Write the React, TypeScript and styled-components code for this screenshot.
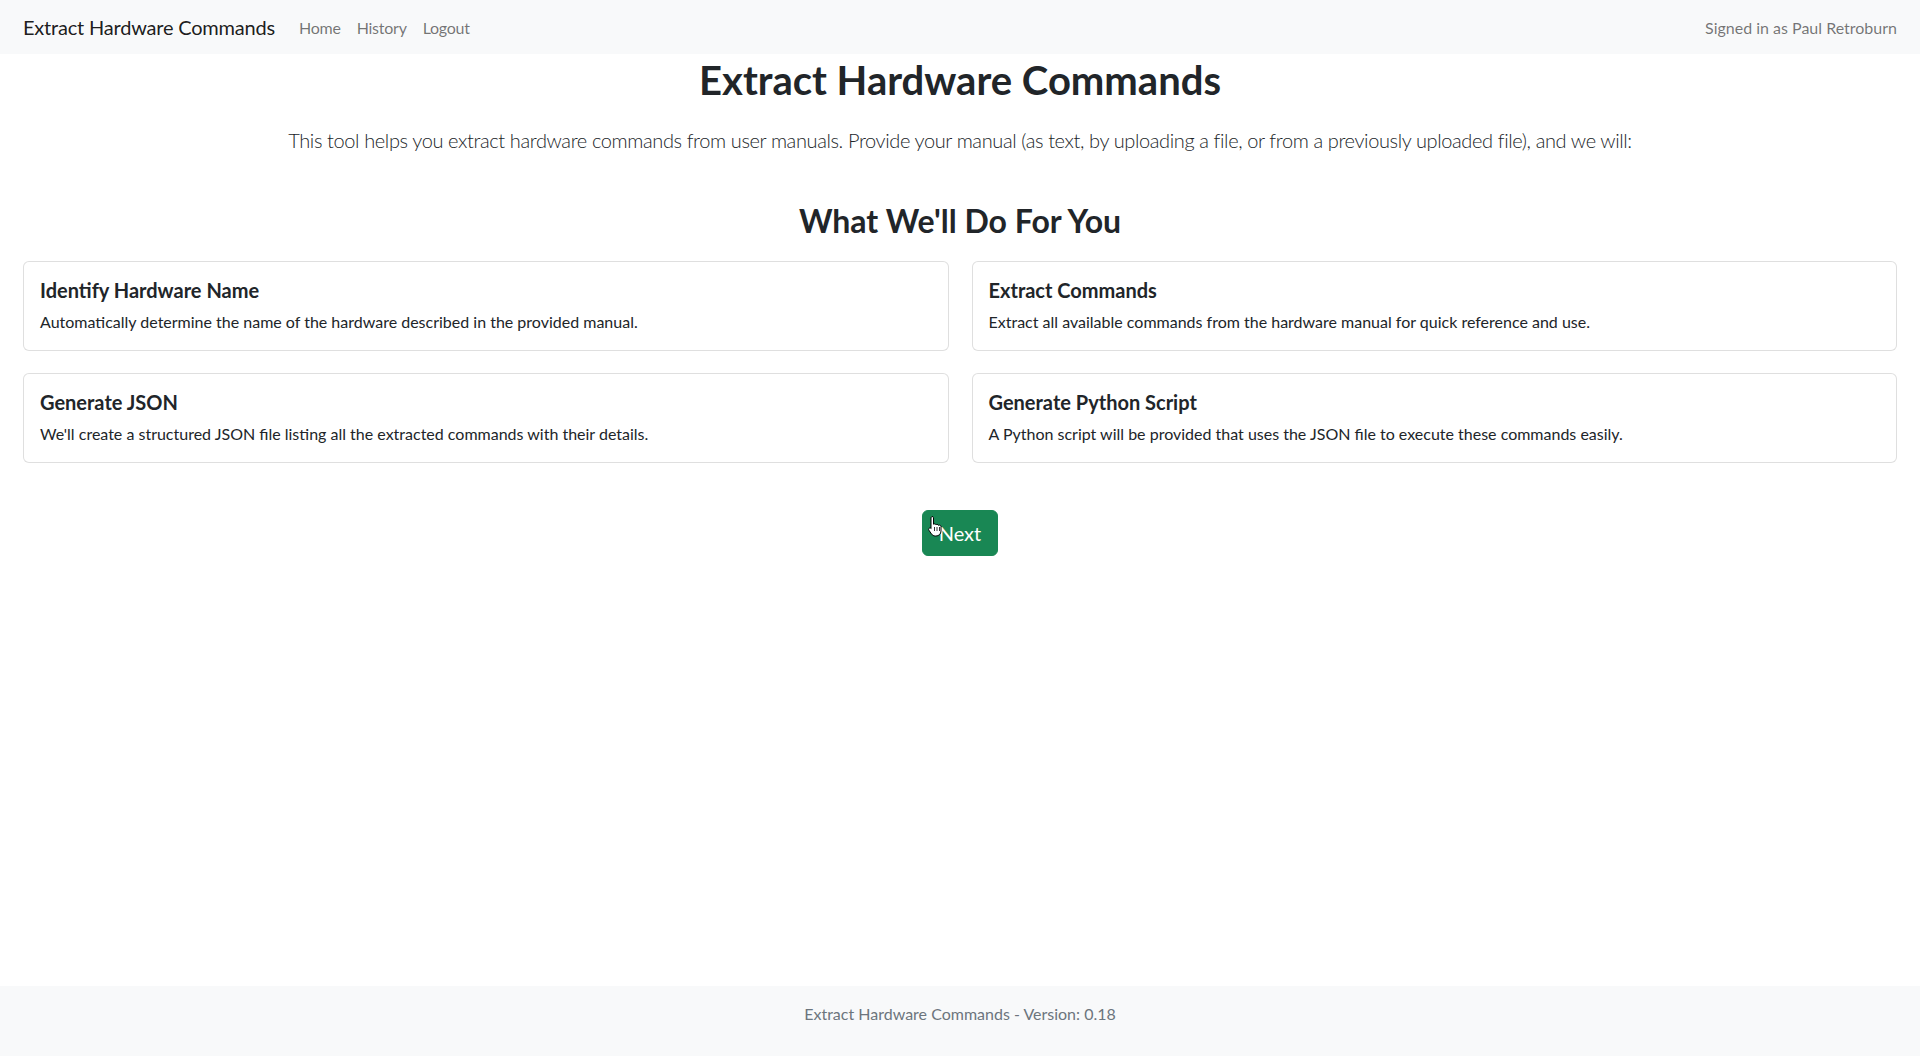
import React from "react";
import styled, { createGlobalStyle } from "styled-components";

const Global = createGlobalStyle`
  html, body { margin: 0; padding: 0; }
  body {
    font-family: Lato, "Noto Sans", "Liberation Sans", sans-serif;
    color: #212529;
    background: #fff;
  }
  * { box-sizing: border-box; }
`;

const Page = styled.div`
  min-height: 100vh;
  display: flex;
  flex-direction: column;
`;

const Navbar = styled.nav`
  height: 54px;
  background: #f8f9fa;
  display: flex;
  align-items: center;
  padding: 0 23px;
`;

const Brand = styled.a`
  font-size: 20px;
  color: rgba(0, 0, 0, 0.9);
  margin-right: 16px;
  letter-spacing: -0.2px;
  text-decoration: none;
`;

const NavLinks = styled.div`
  display: flex;
  flex: 1;
`;

const NavLink = styled.a`
  font-size: 16px;
  color: rgba(0, 0, 0, 0.55);
  padding: 8px 8px;
  letter-spacing: -0.25px;
  text-decoration: none;
`;

const NavText = styled.span`
  font-size: 16px;
  color: rgba(0, 0, 0, 0.55);
`;

const Main = styled.main`
  flex: 1;
  padding: 0 23px;
  display: flex;
  flex-direction: column;
  align-items: center;
`;

const Title = styled.h1`
  font-size: 40px;
  font-weight: 700;
  line-height: 1.2;
  margin: 2px 0 21px;
  text-align: center;
`;

const Lead = styled.p`
  font-size: 20px;
  font-weight: 300;
  line-height: 1.5;
  letter-spacing: -0.38px;
  margin: 0;
  color: #212529;
  text-align: center;
`;

const SectionTitle = styled.h2`
  font-size: 32px;
  font-weight: 700;
  line-height: 1.2;
  margin: 47px 0 21px;
  text-align: center;
`;

const Grid = styled.div`
  width: 100%;
  display: grid;
  grid-template-columns: 1fr 1fr;
  column-gap: 23px;
  row-gap: 22px;
`;

const Card = styled.div`
  border: 1px solid rgba(0, 0, 0, 0.125);
  border-radius: 6px;
  padding: 16px;
  background: #fff;
`;

const CardTitle = styled.h5`
  font-size: 20px;
  font-weight: 700;
  line-height: 1.2;
  margin: 0 0 8px;
`;

const CardText = styled.p`
  font-size: 16px;
  line-height: 1.5;
  margin: 0;
`;

const ButtonWrap = styled.div`
  position: relative;
  margin-top: 47px;
`;

const NextButton = styled.button`
  font-family: inherit;
  font-size: 20px;
  line-height: 1.5;
  padding: 7px 16px;
  border-radius: 6px;
  border: 1px solid #198754;
  background: #198754;
  color: #fff;
  cursor: pointer;
`;

const Cursor = styled.svg`
  position: absolute;
  left: 6px;
  top: 5px;
  pointer-events: none;
`;

const Footer = styled.footer`
  height: 70px;
  background: #f8f9fa;
  display: flex;
  align-items: center;
  justify-content: center;
  color: #6c757d;
  font-size: 16px;
  padding-bottom: 16px;
`;

const cards = [
  {
    title: "Identify Hardware Name",
    text: "Automatically determine the name of the hardware described in the provided manual.",
  },
  {
    title: "Extract Commands",
    text: "Extract all available commands from the hardware manual for quick reference and use.",
  },
  {
    title: "Generate JSON",
    text: "We'll create a structured JSON file listing all the extracted commands with their details.",
  },
  {
    title: "Generate Python Script",
    text: "A Python script will be provided that uses the JSON file to execute these commands easily.",
  },
];

export default function App() {
  return (
    <Page>
      <Global />
      <Navbar>
        <Brand href="#">Extract Hardware Commands</Brand>
        <NavLinks>
          <NavLink href="#">Home</NavLink>
          <NavLink href="#">History</NavLink>
          <NavLink href="#">Logout</NavLink>
        </NavLinks>
        <NavText>Signed in as Paul Retroburn</NavText>
      </Navbar>
      <Main>
        <Title>Extract Hardware Commands</Title>
        <Lead>
          This tool helps you extract hardware commands from user manuals. Provide your manual (as text, by
          uploading a file, or from a previously uploaded file), and we will:
        </Lead>
        <SectionTitle>What We'll Do For You</SectionTitle>
        <Grid>
          {cards.map((c) => (
            <Card key={c.title}>
              <CardTitle>{c.title}</CardTitle>
              <CardText>{c.text}</CardText>
            </Card>
          ))}
        </Grid>
        <ButtonWrap>
          <NextButton>Next</NextButton>
          <Cursor width="16" height="22" viewBox="0 0 16 22">
            <path
              d="M4 1.5c.8 0 1.5.7 1.5 1.5v6.2c.3-.2.7-.3 1.1-.3.7 0 1.2.4 1.4.9.3-.3.7-.4 1.1-.4.7 0 1.2.4 1.4 1 .3-.2.6-.3 1-.3.9 0 1.5.7 1.5 1.5v4.4c0 2.9-2.2 5-5 5H7.3c-1.6 0-2.9-.8-3.8-2L.9 15.2c-.5-.7-.3-1.6.4-2 .6-.4 1.4-.3 1.9.3l-.2-.1V3c0-.8.7-1.5 1.5-1.5z"
              fill="#fff"
              stroke="#000"
              strokeWidth="1"
            />
            <path d="M6.5 12v4M9 12v4M11.5 12v4" stroke="#000" strokeWidth="0.8" />
          </Cursor>
        </ButtonWrap>
      </Main>
      <Footer>Extract Hardware Commands - Version: 0.18</Footer>
    </Page>
  );
}
